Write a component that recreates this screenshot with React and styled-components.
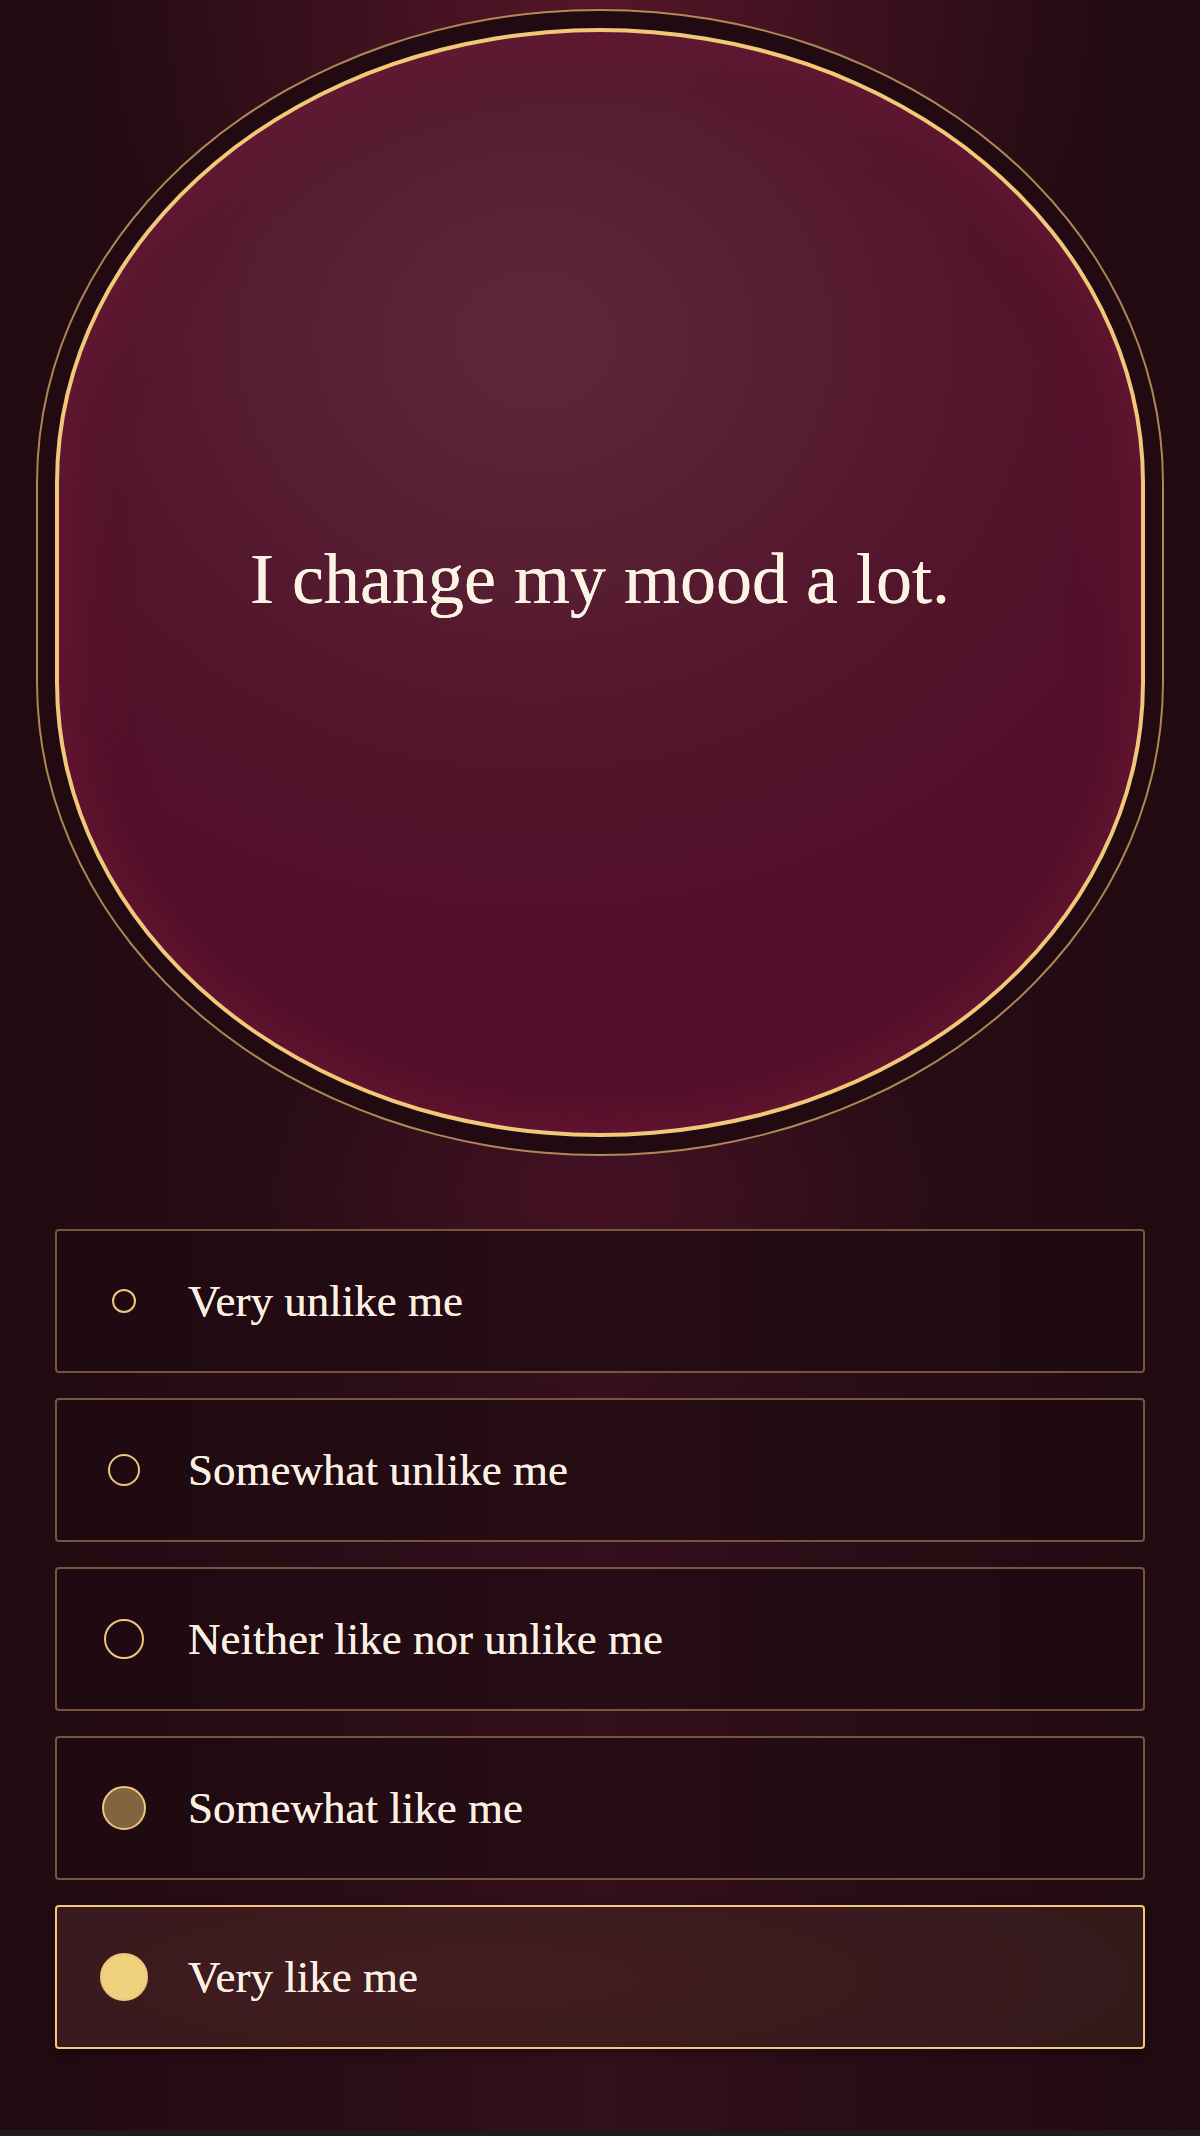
import React, { useState } from "react";
import styled, { createGlobalStyle } from "styled-components";

const GlobalStyle = createGlobalStyle`
  html, body {
    margin: 0;
    padding: 0;
    background: #1b1c1b;
  }
  * { box-sizing: border-box; }
`;

const Page = styled.main`
  width: 1200px;
  padding: 28px 55px 81px;
  display: flex;
  flex-direction: column;
  font-family: "Liberation Serif", "DejaVu Serif", serif;
  color: #fbf3e4;
  background:
    radial-gradient(ellipse 42% 22% at 50% 0%, rgba(112, 26, 52, 0.55), transparent),
    radial-gradient(ellipse 30% 10% at 50% 56%, rgba(90, 20, 42, 0.45), transparent),
    linear-gradient(90deg, #210a11 0%, #2a0d16 30%, #340f1c 50%, #2a0d16 70%, #210a11 100%);
`;

const Card = styled.section`
  height: 1109px;
  display: flex;
  align-items: center;
  justify-content: center;
  border: 4px solid #f1c878;
  border-radius: 50% / 41%;
  background:
    radial-gradient(ellipse 65% 55% at 44% 28%, #5f2838 0%, #581f33 35%, #53152c 65%, rgba(82, 16, 40, 0) 100%),
    #520f29;
  box-shadow:
    inset 0 0 60px rgba(110, 24, 54, 0.95),
    0 0 0 17px #210a11,
    0 0 0 19px rgba(196, 158, 98, 0.85);
`;

const Statement = styled.h1`
  margin: 0 0 6px;
  font-size: 72px;
  font-weight: 400;
  color: #fbf3e4;
  text-shadow: 0 0 0.6px #fbf3e4;
`;

const Options = styled.ul`
  list-style: none;
  margin: 92px 0 0;
  padding: 0;
  display: flex;
  flex-direction: column;
  gap: 25px;
`;

const Option = styled.li`
  height: 144px;
  display: flex;
  align-items: center;
  gap: 40px;
  padding: 0 43px;
  border-radius: 4px;
  cursor: pointer;
  border: 2px solid ${p => (p.$selected ? "#f1c878" : "rgba(190, 145, 100, 0.55)")};
  background: ${p =>
    p.$selected
      ? "radial-gradient(ellipse 60% 100% at 40% 50%, #431d21, #3a1a1e 70%, #351a1c)"
      : "linear-gradient(90deg, #1f0a11, #260c15 50%, #1f0a11)"};
  box-shadow: ${p => (p.$selected ? "0 4px 10px rgba(0,0,0,0.35)" : "none")};
`;

const DotSlot = styled.span`
  width: 48px;
  display: flex;
  align-items: center;
  justify-content: center;
  flex-shrink: 0;
`;

const Dot = styled.span`
  width: ${p => p.$size}px;
  height: ${p => p.$size}px;
  border-radius: 50%;
  border: 2px solid #ecc77c;
  background: ${p => p.$fill};
`;

const Label = styled.span`
  font-size: 45px;
  color: #f9f0e2;
  text-shadow: 0 0 0.5px #f9f0e2;
`;

const answers = [
  { label: "Very unlike me", size: 24, fill: "transparent" },
  { label: "Somewhat unlike me", size: 32, fill: "transparent" },
  { label: "Neither like nor unlike me", size: 40, fill: "transparent" },
  { label: "Somewhat like me", size: 44, fill: "rgba(232, 190, 110, 0.5)" },
  { label: "Very like me", size: 48, fill: "#f0d27e" },
];

export default function App() {
  const [selected, setSelected] = useState(4);
  return (
    <>
      <GlobalStyle />
      <Page>
        <Card>
          <Statement>I change my mood a lot.</Statement>
        </Card>
        <Options>
          {answers.map((a, i) => (
            <Option key={a.label} $selected={selected === i} onClick={() => setSelected(i)}>
              <DotSlot>
                <Dot $size={a.size} $fill={a.fill} />
              </DotSlot>
              <Label>{a.label}</Label>
            </Option>
          ))}
        </Options>
      </Page>
    </>
  );
}
